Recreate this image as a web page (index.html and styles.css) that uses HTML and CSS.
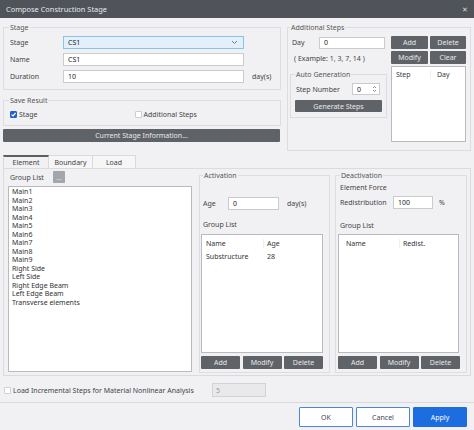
FILE: index.html
```html
<!DOCTYPE html>
<html>
<head>
<meta charset="utf-8">
<link rel="stylesheet" href="styles.css">
</head>
<body>
<div class="titlebar"><span>Compose Construction Stage</span><span class="close">✕</span></div>
<div class="content">
  <div class="top">
    <div class="leftcol">
      <fieldset class="grp stage">
        <legend>Stage</legend>
        <div class="rows">
          <div class="row"><span class="lbl">Stage</span><div class="field select"><span>CS1</span><svg width="7" height="5" viewBox="0 0 7 5"><path d="M1 1 L3.5 3.5 L6 1" fill="none" stroke="#7a7f86" stroke-width="1"/></svg></div></div>
          <div class="row"><span class="lbl">Name</span><div class="field">CS1</div></div>
          <div class="row"><span class="lbl">Duration</span><div class="field">10</div><span class="unit">day(s)</span></div>
        </div>
      </fieldset>
      <fieldset class="grp save">
        <legend>Save Result</legend>
        <div class="checks">
          <span class="chkitem"><span class="chk on"><svg width="7" height="7" viewBox="0 0 7 7"><path d="M1.5 3.6 L3 5 L5.6 2" fill="none" stroke="#fff" stroke-width="1.2"/></svg></span>Stage</span>
          <span class="chkitem second"><span class="chk"></span>Additional Steps</span>
        </div>
      </fieldset>
      <div class="btn wide">Current Stage Information...</div>
    </div>
    <fieldset class="grp addl">
      <legend>Additional Steps</legend>
      <div class="addlbody">
        <div class="acol">
          <div class="row"><span class="lbl daylbl">Day</span><div class="field dayin">0</div></div>
          <div class="example">( Example: 1, 3, 7, 14 )</div>
          <fieldset class="grp auto">
            <legend>Auto Generation</legend>
            <div class="row steprow"><span class="lbl steplbl">Step Number</span><div class="field spin"><span>0</span><svg width="5" height="8" viewBox="0 0 5 8"><path d="M1 3 L2.5 1.5 L4 3 M1 5 L2.5 6.5 L4 5" fill="none" stroke="#777" stroke-width="0.8"/></svg></div></div>
            <div class="btn gen">Generate Steps</div>
          </fieldset>
        </div>
        <div class="bcol">
          <div class="bgrid">
            <div class="btn">Add</div><div class="btn">Delete</div>
            <div class="btn">Modify</div><div class="btn">Clear</div>
          </div>
          <div class="list steplist">
            <div class="lhead"><span class="c1">Step</span><span class="c2">Day</span></div>
          </div>
        </div>
      </div>
    </fieldset>
  </div>

  <div class="tabs">
    <div class="tab active t1">Element</div>
    <div class="tab t2">Boundary</div>
    <div class="tab t3">Load</div>
  </div>
  <div class="panel">
    <div class="gcol">
      <div class="glhead"><span>Group List</span><span class="dots">...</span></div>
      <div class="list grouplist">
        <div>Main1</div><div>Main2</div><div>Main3</div><div>Main4</div><div>Main5</div>
        <div>Main6</div><div>Main7</div><div>Main8</div><div>Main9</div>
        <div>Right Side</div><div>Left Side</div><div>Right Edge Beam</div><div>Left Edge Beam</div>
        <div>Transverse elements</div>
      </div>
    </div>
    <fieldset class="grp act">
      <legend>Activation</legend>
      <div class="row agerow"><span class="lbl agelbl">Age</span><div class="field agein">0</div><span class="unit">day(s)</span></div>
      <div class="sublbl a">Group List</div>
      <div class="list tbl">
        <div class="trow head"><span class="n">Name</span><span class="v">Age</span></div>
        <div class="trow"><span class="n">Substructure</span><span class="v">28</span></div>
      </div>
      <div class="b3"><div class="btn">Add</div><div class="btn">Modify</div><div class="btn">Delete</div></div>
    </fieldset>
    <fieldset class="grp deact">
      <legend>Deactivation</legend>
      <div class="sublbl ef">Element Force</div>
      <div class="row redrow"><span class="lbl redlbl">Redistribution</span><div class="field redin">100</div><span class="unit pct">%</span></div>
      <div class="sublbl d">Group List</div>
      <div class="list tbl">
        <div class="trow head"><span class="n dn">Name</span><span class="v">Redist.</span></div>
      </div>
      <div class="b3"><div class="btn">Add</div><div class="btn">Modify</div><div class="btn">Delete</div></div>
    </fieldset>
  </div>

  <div class="loadrow">
    <span class="loadlbl"><span class="chk"></span>Load Incremental Steps for Material Nonlinear Analysis</span>
    <div class="field dis">5</div>
  </div>
</div>
<div class="footer">
  <div class="fbtn">OK</div>
  <div class="fbtn">Cancel</div>
  <div class="fbtn apply">Apply</div>
</div>
</body>
</html>
```
FILE: styles.css
```css
* { box-sizing: border-box; }
html, body { margin: 0; padding: 0; }
body {
  width: 474px; height: 430px; overflow: hidden;
  background: #f1f1f3;
  font-family: "Noto Sans", "Liberation Sans", sans-serif;
  font-size: 7px; color: #3c3c3c;
}
.titlebar {
  height: 18px; background: #50545a; color: #e6e7e9;
  display: flex; align-items: center; justify-content: space-between;
  padding: 0 6px 0 6px; font-size: 7.4px;
}
.close { font-size: 7px; color: #d8d9db; }
.content { padding: 5px 3px 0 3px; }
.top { display: flex; gap: 6px; align-items: flex-start; }
.leftcol { width: 278px; flex: none; }

.grp { margin: 0; border: 1px solid #dcdde0; padding: 0 6px 6px 6px; min-width: 0; flex: none; }
legend { padding: 0 1px; margin-left: -1px; line-height: 9px; color: #555; }

.row { display: flex; align-items: center; height: 13px; }
.lbl { width: 53px; color: #444; flex: none; }
.field {
  height: 13px; border: 1px solid #cacbce; background: #fff; flex: none;
  padding: 0 4px; display: flex; align-items: center; color: #222;
}
.unit { margin-left: 8px; color: #444; }

.stage { padding-bottom: 6px; }
.stage .rows { margin-top: 4px; display: flex; flex-direction: column; gap: 4px; }
.stage .field { width: 181px; }
.select { background: #e3effb; border-color: #86c6e3; justify-content: space-between; padding-right: 5px; }

.save { margin-top: 6px; padding-bottom: 6px; }
.checks { margin-top: 5px; height: 9px; display: flex; align-items: center; }
.chkitem { display: flex; align-items: center; gap: 1px; color: #444; }
.chkitem.second { margin-left: 97px; }
.chk {
  width: 7px; height: 7px; border: 1px solid #cfcfd2; background: #fff;
  border-radius: 1px; display: inline-flex; margin-right: 1px; flex: none;
}
.chk.on { background: #2262cc; border-color: #2262cc; }
.chk.on svg { margin: -1px; }

.btn {
  height: 13px; background: #5f6368; color: #e8e8ea; border-radius: 1px;
  display: flex; align-items: center; justify-content: center;
}
.btn.wide { margin-top: 3px; width: 277px; }

.addl { width: 184px; padding: 0 4px 8px 3px; }
.addlbody { display: flex; gap: 4px; margin-top: 4px; }
.acol { width: 96px; flex: none; }
.daylbl { width: 28px; padding-left: 1px; }
.dayin { width: 66px; height: 12px; }
.example { margin-top: 5px; padding-left: 3px; height: 9px; line-height: 9px; color: #444; }
.auto { margin: 7px 0 0 -1px; width: 97px; padding: 0 4px 5px 5px; }
.steprow { margin-top: 4px; height: 12px; }
.steplbl { width: 56px; }
.spin { width: 28px; height: 12px; justify-content: space-between; padding: 0 2px 0 4px; }
.gen { margin: 5px 0 0 -1px; width: 87px; height: 12px; }
.bcol { width: 75px; flex: none; }
.bgrid { display: grid; grid-template-columns: 37px 36px; gap: 2px; }
.list { background: #fff; border: 1px solid #b9babd; }
.steplist { margin-top: 2px; height: 76px; }
.lhead { display: flex; height: 13px; align-items: center; margin-top: 1px; }
.lhead .c1 { width: 39px; padding-left: 4px; border-right: 1px solid #f0f0f0; }
.lhead .c2 { padding-left: 6px; }

.tabs { display: flex; margin-top: 4px; height: 13px; }
.tab {
  height: 13px; display: flex; align-items: center; justify-content: center;
  background: #f6f6f7; border: 1px solid #d9dadd; border-bottom: none; border-left: none; color: #444;
}
.tab.active { background: #f1f1f3; border-top: 2px solid #5b5e63; border-left: 1px solid #d9dadd; }
.t1 { width: 46px; } .t2 { width: 44px; } .t3 { width: 43px; }

.panel {
  width: 468px; height: 208px; border: 1px solid #dadbde;
  display: flex; padding: 2px 0 0 4px; align-items: flex-start;
}
.gcol { width: 184px; flex: none; }
.glhead { height: 12px; display: flex; align-items: center; padding-left: 2px; }
.glhead span:first-child { width: 43px; color: #444; }
.dots {
  width: 12px; height: 12px; background: #a3a6aa; color: #fff; border-radius: 1px;
  display: flex; align-items: flex-end; justify-content: center; line-height: 9px; font-size: 6px;
}
.grouplist { margin-top: 3px; height: 186px; padding: 1px 3px; line-height: 8.5px; color: #333; }

.act { width: 131px; margin-left: 7px; padding: 0 6px 3px 1px; }
.act legend { margin-left: 2px; }
.agerow { margin-top: 17px; padding-left: 2px; }
.agelbl { width: 25px; }
.agein { width: 51px; }
.sublbl { height: 8px; line-height: 8px; padding-left: 2px; color: #444; }
.sublbl.a { margin-top: 11px; }
.act .tbl { margin-top: 5px; }
.tbl { width: 122px; height: 119px; padding-top: 2px; flex: none; }
.trow { display: flex; height: 13px; align-items: center; color: #333; }
.trow .n { width: 62px; padding-left: 4px; }
.trow.head .n { border-right: 1px solid #f0f0f0; }
.trow .v { padding-left: 3px; }
.b3 { display: grid; grid-template-columns: repeat(3, 1fr); gap: 2.5px; margin-top: 3px; width: 122px; }

.deact { width: 132px; margin-left: 5px; padding: 0 4px 3px 2px; }
.deact legend { margin-left: 2px; }
.ef { margin-top: 3px; height: 9px; line-height: 9px; }
.redrow { margin-top: 4px; padding-left: 2px; }
.redlbl { width: 53px; }
.redin { width: 40px; }
.pct { margin-left: 6px; }
.sublbl.d { margin-top: 13px; }
.deact .tbl { margin-top: 4px; width: 121px; }
.deact .trow .n { width: 61px; padding-left: 7px; }
.deact .b3 { width: 122px; }

.loadrow { display: flex; align-items: center; margin-top: 7px; height: 14px; padding-left: 1px; }
.loadlbl { width: 208px; flex: none; display: flex; align-items: center; gap: 1px; color: #444; }
.dis { width: 54px; height: 14px; background: #e9e9eb; border-color: #d2d3d6; color: #9a9a9c; padding-left: 3px; }

.footer {
  margin-top: 5px; border-top: 1px solid #d9dadd; height: 30px;
  display: flex; justify-content: flex-end; gap: 3px; padding: 4px 7px 0 0;
}
.fbtn {
  width: 54px; height: 20px; border: 1px solid #4c86d6; background: #fff; border-radius: 1px;
  display: flex; align-items: center; justify-content: center; color: #3d4756;
}
.fbtn.apply { background: #1c6de0; border-color: #1c6de0; color: #fff; }
```
